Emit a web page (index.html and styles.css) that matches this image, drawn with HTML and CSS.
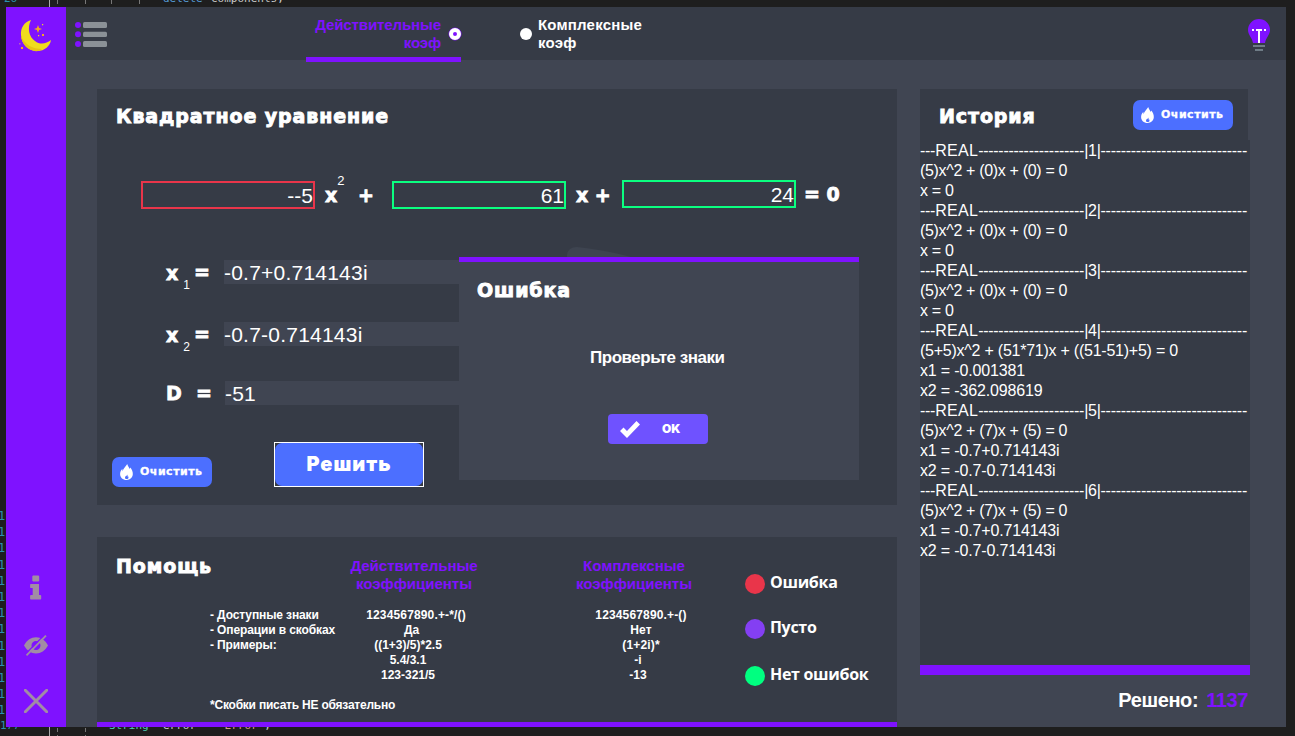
FILE: index.html
```
<!DOCTYPE html>
<html lang="ru">
<head>
<meta charset="utf-8">
<title>Квадратное уравнение</title>
<link rel="stylesheet" href="styles.css">
</head>
<body>
<svg width="0" height="0" class="defs">
  <symbol id="flame" viewBox="0 0 13 16"><path fill="#fff" fill-rule="evenodd" d="M7.2 0C7.600 2 9 3.200 9.700 4.900L10.200 3.600C12 5.600 13 8 12.800 10.300C12.600 13.600 10 16 6.600 16C2.900 16 .2 13.500 .1 10.200C0 8 .9 6.200 2.300 5L2.700 7.300C3.200 5 4.200 3.900 5.200 2.700C6.100 1.700 6.800 1 7.200 0ZM7.300 10.500C7 12 5 12 5 13.500C5 14.500 5.700 15 6.600 15C7.700 15 8.500 14.400 8.500 13.400C8.500 12.800 8.300 12.500 8 12.200L7.500 12.800C7.700 12 7.600 11.200 7.300 10.500Z"/></symbol>
</svg>

<div class="editor">
  <div class="code code-top"><span class="ln">26</span><b class="kw">delete</b><span>components;</span></div>
  <div class="code code-bottom"><span class="ln">177</span><b class="type">String</b><span class="id">error</span><i class="str">"Error"</i><span>;</span></div>
  <div class="gutter">1<br>1<br>1<br>1<br>1<br>1<br>1<br>1<br>1<br>1<br>1<br>1<br>1</div>
  <i class="guide g1"></i><i class="guide g2"></i><i class="guide g3"></i><i class="guide g4"></i><i class="guide g5"></i>
</div>

<div class="window">
  <aside class="sidebar">
    <svg class="moon" width="34" height="34" viewBox="0 0 34 34">
      <path fill="#f0dc1e" d="M13 1C6 3 2.500 9 3 16C3.500 25 10 32 19 32C27 32 32 27 33 21C28 25 22 26 17 22C11 18 9 9 13 1Z"/>
      <path fill="#e8c415" d="M3 17C7 26 15 30 24 30C22 32 19 32.500 17 32C9 31 3.500 24 3 17Z"/>
      <path fill="#f5a623" d="M20 6L21.100 8.900L24 10L21.100 11L20 14L18.900 11L16 10L18.900 8.900ZM24 15h2v2h-2zM3 28h2v2H3z"/>
      <path fill="#f0dc1e" d="M24 5h1.200v1.200H24zM20 16h1.200v1.200H20z"/>
      <path fill="#b45ec0" d="M1 24h1.500v1.500H1z"/>
    </svg>
    <div class="tools">
      <svg width="12" height="25" viewBox="0 0 12 25"><path fill="#a18ca4" d="M3 .5h5.500l.7.700v4.600l-.7.700H3l-.7-.7V1.200ZM.8 9H9v11h1.300q.9 0 .9.900v2.700q0 .9-.9.900H1q-.9 0-.9-.9v-2.700q0-.9.900-.9h1.700v-7H.8q-.7 0-.7-.7V9.700Q.1 9 .8 9Z"/></svg>
      <svg width="24" height="21" viewBox="0 0 24 21"><path fill="#a18ca4" fill-rule="evenodd" d="M0 10.500C3 5 7 2.300 12 2.300S21 5 24 10.500C21 15.800 17 18.500 12 18.500S3 15.800 0 10.500ZM12 6a4.500 4.500 0 1 0 0 9a4.500 4.500 0 0 0 0-9Z"/><path d="M1.500 19L20.800-.5" stroke="#7f12ff" stroke-width="1.300"/><path d="M2.500 20.300L22 .6" stroke="#a18ca4" stroke-width="1.800"/></svg>
      <svg width="24" height="24" viewBox="0 0 24 24"><path d="M1.300 1.300L22.700 22.700M22.700 1.300L1.300 22.700" stroke="#a18ca4" stroke-width="3" stroke-linecap="round"/></svg>
    </div>
  </aside>

  <div class="main">
    <header class="topbar">
      <svg class="menu" width="32" height="27" viewBox="0 0 32 27">
        <g fill="#7f12ff"><circle cx="3" cy="4" r="3"/><circle cx="3" cy="13.300" r="3"/><circle cx="3" cy="23" r="3"/></g>
        <g fill="#8b9197"><rect x="8" y="1" width="24" height="6" rx="1.500"/><rect x="8" y="10.700" width="24" height="5.300" rx="1.500"/><rect x="8" y="20" width="24" height="6" rx="1.500"/></g>
      </svg>
      <label class="tab tab-real"><span class="tab-text">Действительные<br>коэф</span><i class="radio on"></i></label>
      <label class="tab tab-complex"><i class="radio"></i><span class="tab-text">Комплексные<br>коэф</span></label>
      <svg class="bulb" width="22" height="33" viewBox="0 0 22 33">
        <path fill="#7f12ff" d="M11 0a11 11 0 0 1 11 11C22 16 18 18.500 17 24H5C4 18.500 0 16 0 11A11 11 0 0 1 11 0Z"/>
        <path fill="#fff" d="M4 10h2v2H4zM8 10h6v2h-2v12h-2V12H8zM16 10h2v2h-2z"/>
        <path fill="#6f7c86" d="M5 26h12v2H5zM7 30h8v2H7z"/>
      </svg>
    </header>

    <div class="content">
      <div class="left">
        <section class="panel solver">
          <h2 class="title t-solver">Квадратное уравнение</h2>
          <div class="equation">
            <div class="coef bad">--5</div>
            <span class="op op-a">x<sup>2</sup></span><span class="op op-plus">+</span>
            <div class="coef">61</div>
            <span class="op op-b">x +</span>
            <div class="coef coef-c">24</div>
            <span class="op op-c">= 0</span>
          </div>
          <div class="results">
            <div class="row"><span class="var">x<sub>1</sub></span><span class="eq">=</span><div class="value">-0.7+0.714143i</div></div>
            <div class="row"><span class="var">x<sub>2</sub></span><span class="eq">=</span><div class="value">-0.7-0.714143i</div></div>
            <div class="row row-d"><span class="var">D</span><span class="eq">=</span><div class="value">-51</div></div>
          </div>
          <div class="actions">
            <button class="btn clear"><svg width="13" height="16"><use href="#flame"/></svg><span>Очистить</span></button>
            <div class="focus"><button class="btn solve"><span>Решить</span></button></div>
          </div>
          <svg class="watermark" width="90" height="14" viewBox="0 0 90 14"><path fill="#3e4450" d="M0 14V8Q1 0 10 0Q42 3 78 14Z"/></svg>
          <div class="dialog">
            <h2 class="title t-dialog">Ошибка</h2>
            <p class="message">Проверьте знаки</p>
            <button class="btn ok"><svg width="20" height="17" viewBox="0 0 20 17"><path fill="#fff" d="M0 10L3.500 6.500L7 10L16.500 0L20 3.500L7 17Z"/></svg><span>OK</span></button>
          </div>
        </section>

        <section class="panel help">
          <h2 class="title t-help">Помощь</h2>
          <div class="topics">- Доступные знаки<br>- Операции в скобках<br>- Примеры:<p class="note">*Скобки писать НЕ обязательно</p></div>
          <div class="col col-real"><h3>Действительные<br>коэффициенты</h3><p><span class="wide">1234567890.+-*/()</span><span class="yes">Да</span><span>((1+3)/5)*2.5</span><span>5.4/3.1</span><span>123-321/5</span></p></div>
          <div class="col col-complex"><h3>Комплексные<br>коэффициенты</h3><p><span class="wide">1234567890.+-()</span><span class="wide">Нет</span><span class="wide">(1+2i)*</span><span>-i</span><span>-13</span></p></div>
          <ul class="legend">
            <li><i class="dot red"></i><span>Ошибка</span></li>
            <li><i class="dot violet"></i><span>Пусто</span></li>
            <li><i class="dot green"></i><span>Нет ошибок</span></li>
          </ul>
        </section>
      </div>

      <div class="right">
        <div class="history-head">
          <h2 class="title t-history">История</h2>
          <button class="btn clear"><svg width="13" height="16"><use href="#flame"/></svg><span>Очистить</span></button>
        </div>
        <div class="log">
          <div class="rule">---<span class="real">REAL</span>---------------------|1|-----------------------------</div>
          <div>(5)x^2 + (0)x + (0) = 0</div><div>x = 0</div>
          <div class="rule">---<span class="real">REAL</span>---------------------|2|-----------------------------</div>
          <div>(5)x^2 + (0)x + (0) = 0</div><div>x = 0</div>
          <div class="rule">---<span class="real">REAL</span>---------------------|3|-----------------------------</div>
          <div>(5)x^2 + (0)x + (0) = 0</div><div>x = 0</div>
          <div class="rule">---<span class="real">REAL</span>---------------------|4|-----------------------------</div>
          <div class="long">(5+5)x^2 + (51*71)x + ((51-51)+5) = 0</div><div class="root">x1 = -0.001381</div><div class="root">x2 = -362.098619</div>
          <div class="rule">---<span class="real">REAL</span>---------------------|5|-----------------------------</div>
          <div>(5)x^2 + (7)x + (5) = 0</div><div class="root">x1 = -0.7+0.714143i</div><div class="root">x2 = -0.7-0.714143i</div>
          <div class="rule">---<span class="real">REAL</span>---------------------|6|-----------------------------</div>
          <div>(5)x^2 + (7)x + (5) = 0</div><div class="root">x1 = -0.7+0.714143i</div><div class="root">x2 = -0.7-0.714143i</div>
        </div>
        <div class="solved"><span>Решено:</span><b>1137</b></div>
      </div>
    </div>
  </div>
</div>
</body>
</html>
```
FILE: styles.css
```
* { box-sizing: border-box; }
body { margin: 0; width: 1295px; height: 736px; overflow: hidden; position: relative; background: #1e1e1e; color: #fff; font-family: "Liberation Sans", Arial, sans-serif; }
h2, h3, p, ul { margin: 0; padding: 0; }
button { border: 0; padding: 0; }
svg { display: block; flex: none; }
.defs { position: absolute; }

/* Editor visible around the window */
.editor { position: absolute; inset: 0; overflow: hidden; }
.code { position: absolute; left: 0; display: flex; white-space: pre; font: 11px/16px "DejaVu Sans Mono", monospace; color: #c8c8c8; }
.code-top { top: -9px; }
.code-bottom { top: 718px; }
.ln, .gutter { color: #2b91af; }
.code-top .ln { width: 163px; padding-left: 4px; }
.code-bottom .ln { width: 109px; }
.kw { color: #569cd6; font-weight: 400; width: 48px; }
.type { color: #4ec9b0; font-weight: 400; width: 54px; }
.id { width: 55px; }
.str { color: #d69d85; font-style: normal; }
.gutter { position: absolute; left: -2px; top: 508px; font: 12px/16.200px "DejaVu Sans Mono", monospace; }
.guide { position: absolute; top: 0; width: 1px; height: 736px; background: repeating-linear-gradient(#777 0 4px, transparent 4px 7px); }
.g1 { left: 49px; background: #aaa; }
.g2 { left: 57px; }
.g3 { left: 85px; }
.g4 { left: 111px; height: 7px; }
.g5 { left: 139px; height: 7px; }

/* Window frame */
.window { position: absolute; left: 6px; top: 7px; width: 1280px; height: 720px; display: flex; background: #404552; }
.sidebar { width: 60px; background: #7f12ff; display: flex; flex-direction: column; justify-content: space-between; padding: 12px 0 14px 12px; }
.tools { display: flex; flex-direction: column; gap: 33px; padding-left: 6px; }
.tools svg:first-child { margin: -1px 0 2px 6px; }
.main { width: 1220px; }
.topbar { height: 53px; background: #363b46; display: flex; align-items: flex-start; }
.menu { margin: 14px 0 0 9px; }
.tab { display: flex; height: 55px; font-weight: 700; font-size: 15px; line-height: 18px; }
.tab-text { padding-top: 9px; letter-spacing: .2px; }
.tab-real { width: 155px; margin-left: 199px; justify-content: flex-end; text-align: right; color: #7f12ff; border-bottom: 5px solid #7f12ff; }
.tab-real .tab-text { margin-right: 8px; letter-spacing: -.1px; }
.radio { width: 12px; height: 12px; border-radius: 50%; background: #fff; margin-top: 21px; flex: none; }
.radio.on { border: 4px solid #fff; background: #7f12ff; box-shadow: 0 0 0 .5px #7f12ff; }
.tab-complex { margin-left: 59px; gap: 6px; }
.bulb { margin: 12px 16px 0 auto; }

.content { display: flex; gap: 23px; padding: 29px 0 0 31px; }
.left { width: 800px; display: flex; flex-direction: column; gap: 32px; }
.panel { background: #363b46; position: relative; }
.title { font: 700 19px/24px "DejaVu Sans", "Liberation Sans", sans-serif; letter-spacing: .9px; white-space: nowrap; -webkit-text-stroke: .9px #fff; }

/* Solver */
.solver { height: 416px; padding-top: 15px; }
.t-solver { padding-left: 19px; }
.equation { display: flex; padding: 53px 0 0 44px; height: 110px; }
.coef { width: 174px; height: 28px; border: 2px solid #0bff80; font-size: 21px; line-height: 25px; text-align: right; flex: none; }
.coef.bad { border-color: #e9354a; }
.coef-c { margin-top: -1px; }
.op, .var, .eq { font: 700 19px/28px "DejaVu Sans", sans-serif; white-space: pre; flex: none; -webkit-text-stroke: .8px #fff; }
.op sup, .var sub { -webkit-text-stroke: 0; }
.op sup { font: 13px/0 "Liberation Sans", sans-serif; vertical-align: 17px; }
.op-a { width: 35px; padding-left: 10px; }
.op-plus { width: 42px; padding-left: 8px; }
.op-b { width: 56px; padding-left: 10px; }
.op-c { padding-left: 8px; margin-top: -1px; }
.results { padding: 22px 0 0 69px; display: flex; flex-direction: column; gap: 38px; }
.row { display: flex; height: 24px; }
.row-d { margin-top: -3px; }
.var { width: 28px; line-height: 26px; }
.var sub { font: 12px/0 "Liberation Sans", sans-serif; vertical-align: -9px; margin-left: 5px; }
.row-d .var { line-height: 24px; }
.eq { width: 30px; line-height: 24px; }
.value { width: 300px; height: 24px; background: #404552; font-size: 21px; line-height: 25px; letter-spacing: .22px; }
.row-d .eq { padding-left: 2px; width: 31px; }
.actions { display: flex; align-items: flex-end; gap: 62px; padding: 37px 0 0 15px; }
.btn { display: flex; align-items: center; color: #fff; background: #4c6fff; border-radius: 7px; }
.clear { width: 100px; height: 30px; padding-left: 8px; gap: 7px; font: 700 11px/30px "DejaVu Sans", sans-serif; letter-spacing: .5px; -webkit-text-stroke: .3px #fff; }
.focus { width: 150px; height: 45px; border: 1px solid #fff; }
.solve { width: 148px; height: 43px; justify-content: center; font: 900 20px/43px Inter, sans-serif; letter-spacing: 1px; }
.watermark { position: absolute; left: 470px; top: 158px; }

/* Error dialog */
.dialog { position: absolute; left: 362px; top: 168px; width: 400px; height: 223px; border-top: 5px solid #7f12ff; background: #404552; padding: 16px 0 0 18px; }
.message { font-weight: 700; font-size: 17px; line-height: 20px; letter-spacing: -.47px; margin: 46px 0 0 113px; white-space: nowrap; }
.ok { width: 100px; height: 30px; margin: 46px 0 0 131px; padding-left: 12px; gap: 22px; border-radius: 4px; background: #6f52ff; font: 900 12px/30px Inter, sans-serif; }

/* Help */
.help { height: 190px; border-bottom: 5px solid #7f12ff; display: flex; white-space: nowrap; }
.t-help { width: 113px; padding: 17px 0 0 19px; flex: none; }
.topics { width: 127px; padding-top: 71px; font-weight: 700; font-size: 12px; line-height: 15px; letter-spacing: -.12px; flex: none; }
.note { padding-top: 45px; letter-spacing: -.22px; }
.col { padding-top: 20px; text-align: center; flex: none; }
.col h3 { font-size: 15px; line-height: 18px; color: #7f12ff; }
.col p { padding-top: 15px; font-weight: 700; font-size: 12px; line-height: 15px; }
.col p span { display: block; }
.col-real { width: 154px; }
.col-real p { padding-right: 12px; }
.col-real .wide { padding-left: 16px; letter-spacing: .15px; }
.col-real .yes { padding-left: 7px; }
.col-complex { width: 286px; }
.col-complex p { padding-left: 8px; }
.col-complex p .wide { padding-left: 6px; letter-spacing: .15px; }
.legend { list-style: none; display: flex; flex-direction: column; gap: 26px; padding-top: 37px; margin-left: -32px; font: 700 16px/20px "Open Sans", sans-serif; letter-spacing: -.3px; }
.legend li { display: flex; gap: 5px; height: 20px; }
.legend li:nth-child(2) { margin-top: -1px; margin-bottom: 1px; }
.legend span { margin-top: -2px; }
.dot { width: 20px; height: 20px; border-radius: 50%; }
.red { background: #e9354a; }
.violet { background: #843ff3; }
.green { background: #00ff80; }

/* History */
.right { width: 330px; }
.history-head { width: 328px; height: 51px; background: #363b46; display: flex; justify-content: space-between; padding: 11px 15px 0 19px; }
.t-history { padding-top: 4px; }
.log { width: 330px; height: 535px; padding-top: 1px; background: #363b46; border-bottom: 10px solid #7f12ff; font-size: 16px; line-height: 20px; letter-spacing: -.33px; white-space: nowrap; overflow: hidden; }
.rule { letter-spacing: -.28px; }
.real { letter-spacing: .3px; }
.long { letter-spacing: -.24px; }
.root { letter-spacing: -.16px; }
.solved { display: flex; justify-content: flex-end; gap: 8px; padding: 14px 2px 0 0; font-weight: 700; font-size: 20px; line-height: 23px; letter-spacing: -.4px; }
.solved b { color: #7f12ff; }
```
